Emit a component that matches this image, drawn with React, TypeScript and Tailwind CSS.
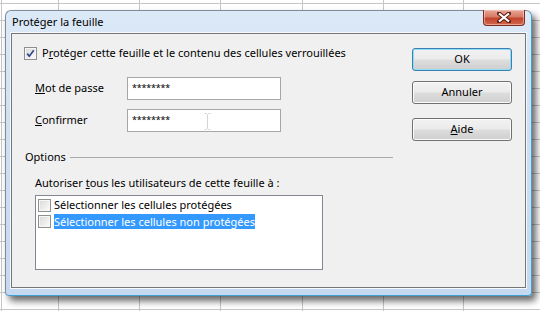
import React from 'react';

const FONT = { fontFamily: '"Noto Sans", "Liberation Sans", sans-serif' };

const COLS = [1, 58, 139, 220, 302, 383, 463];
const ROWS = Array.from({ length: 19 }, (_, i) => 3 + i * 17);

function Check({ checked }: { checked?: boolean }) {
    return (
        <span className="relative block w-[13px] h-[13px] shrink-0 border border-[#8e8f8f] bg-[linear-gradient(135deg,#d8d8d8,#fdfdfd)] shadow-[inset_0_0_0_1px_#f6f6f6]">
            {checked && (
                <svg className="absolute left-0 top-0" width="11" height="11" viewBox="0 0 11 11">
                    <path d="M2.2 5.6 L4.3 8.2 L8.8 2.3" fill="none" stroke="#33488a" strokeWidth="1.7" />
                </svg>
            )}
        </span>
    );
}

function Btn({ children, primary }: { children: React.ReactNode; primary?: boolean }) {
    return (
        <div
            className={
                'flex items-center justify-center w-[100px] h-[23px] rounded-[3px] border text-[11px] text-black bg-[linear-gradient(to_bottom,#f2f2f2_0%,#ebebeb_48%,#dddddd_52%,#cfcfcf_100%)] ' +
                (primary
                    ? 'border-[#3c7fb1] shadow-[inset_0_0_0_1px_#8fdcf6]'
                    : 'border-[#707070] shadow-[inset_0_0_0_1px_#fbfbfb]')
            }
        >
            {children}
        </div>
    );
}

export default function App() {
    return (
        <div className="relative w-[540px] h-[311px] overflow-hidden bg-white" style={FONT}>
            {/* spreadsheet behind the dialog */}
            <svg className="absolute inset-0" width="540" height="311">
                {COLS.map((x) => (
                    <line key={'c' + x} x1={x + 0.5} y1="0" x2={x + 0.5} y2="311" stroke="#c6c6c6" />
                ))}
                {ROWS.map((y) => (
                    <line key={'r' + y} x1="0" y1={y + 0.5} x2="540" y2={y + 0.5} stroke="#c6c6c6" />
                ))}
            </svg>

            {/* dialog window */}
            <div className="absolute left-[5px] top-[10px] w-[527px] h-[286px] flex flex-col rounded-t-[6px] rounded-b-[4px] border border-t-[#7f8b98] border-l-[#7f8b98] border-r-[#3f9fd2] border-b-[#3f9fd2] bg-[linear-gradient(to_bottom,#dce9f7,#cfe0f3_40%,#c4d9ef)] shadow-[4px_5px_7px_rgba(0,0,0,0.6)]">
                <div className="h-[22px] flex items-center pl-[6px] text-[11px] text-black">Protéger la feuille</div>

                {/* close button */}
                <div className="absolute left-[477px] top-[-1px] w-[42px] h-[16px] rounded-b-[4px] border border-t-0 border-[#7e2d21] bg-[linear-gradient(to_bottom,#e8a597,#d87a65_45%,#c2432a_55%,#d0694f)] shadow-[inset_0_0_0_1px_rgba(255,220,210,0.5)] flex items-center justify-center">
                    <svg width="14" height="11" viewBox="0 0 14 11">
                        <path d="M2 1.5 L12 9.5 M12 1.5 L2 9.5" stroke="#5b1e14" strokeWidth="4" strokeLinecap="square" />
                        <path d="M2 1.5 L12 9.5 M12 1.5 L2 9.5" stroke="#ffffff" strokeWidth="2.2" />
                    </svg>
                </div>

                {/* client area */}
                <div className="ml-[5px] w-[515px] h-[255px] flex border border-[#767676] bg-[#f0f0f0] shadow-[0_0_0_1px_#f5f9fd] text-[11px] text-black">
                    <div className="w-[400px] flex flex-col">
                        <div className="mt-[13px] ml-[12px] h-[13px] flex items-center gap-[5px]">
                            <Check checked />
                            <span>
                                P<span className="underline">r</span>otéger cette feuille et le contenu des cellules verrouillées
                            </span>
                        </div>

                        <div className="mt-[17px] h-[23px] flex items-center">
                            <span className="ml-[23px] w-[92px]">
                                <span className="underline">M</span>ot de passe
                            </span>
                            <div className="w-[154px] h-[23px] border border-[#a6a6a6] bg-white pl-[4px] pb-[2px] flex items-center text-[9px] tracking-[-0.2px] leading-none">
                                ********
                            </div>
                        </div>

                        <div className="mt-[9px] h-[23px] flex items-center">
                            <span className="ml-[23px] w-[92px]">
                                <span className="underline">C</span>onfirmer
                            </span>
                            <div className="relative w-[154px] h-[23px] border border-[#a6a6a6] bg-white pl-[4px] pb-[2px] flex items-center text-[9px] tracking-[-0.2px] leading-none">
                                ********
                                <svg className="absolute left-[76px] top-[3px]" width="7" height="17" viewBox="0 0 7 17">
                                    <path d="M0.5 0.5 H2.5 L3.5 1.5 L4.5 0.5 H6.5 M3.5 1.5 V15.5 M0.5 16.5 H2.5 L3.5 15.5 L4.5 16.5 H6.5" fill="none" stroke="#d4d4d4" />
                                </svg>
                            </div>
                        </div>

                        <div className="mt-[17px] ml-[13px] w-[368px] h-[16px] flex items-center gap-[4px]">
                            <span>Options</span>
                            <div className="flex-1 h-px bg-[#a9a9a9]" />
                        </div>

                        <div className="mt-[10px] ml-[23px] h-[16px] flex items-center">
                            <span>
                                Autoriser <span className="underline">t</span>ous les utilisateurs de cette feuille à :
                            </span>
                        </div>

                        <div className="mt-[4px] ml-[23px] w-[288px] h-[75px] border border-[#828790] bg-white pt-[1px] pl-[2px] flex flex-col">
                            <div className="h-[16px] flex items-center gap-[3px]">
                                <Check />
                                <span>Sélectionner les cellules protégées</span>
                            </div>
                            <div className="h-[16px] flex items-center gap-[3px]">
                                <Check />
                                <span className="bg-[#3399ff] text-white leading-[15px]">Sélectionner les cellules non protégées</span>
                            </div>
                        </div>
                    </div>

                    <div className="w-[100px] flex flex-col">
                        <div className="mt-[14px]">
                            <Btn primary>OK</Btn>
                        </div>
                        <div className="mt-[10px]">
                            <Btn>Annuler</Btn>
                        </div>
                        <div className="mt-[14px]">
                            <Btn>
                                <span className="underline">A</span>ide
                            </Btn>
                        </div>
                    </div>
                </div>
            </div>
        </div>
    );
}
